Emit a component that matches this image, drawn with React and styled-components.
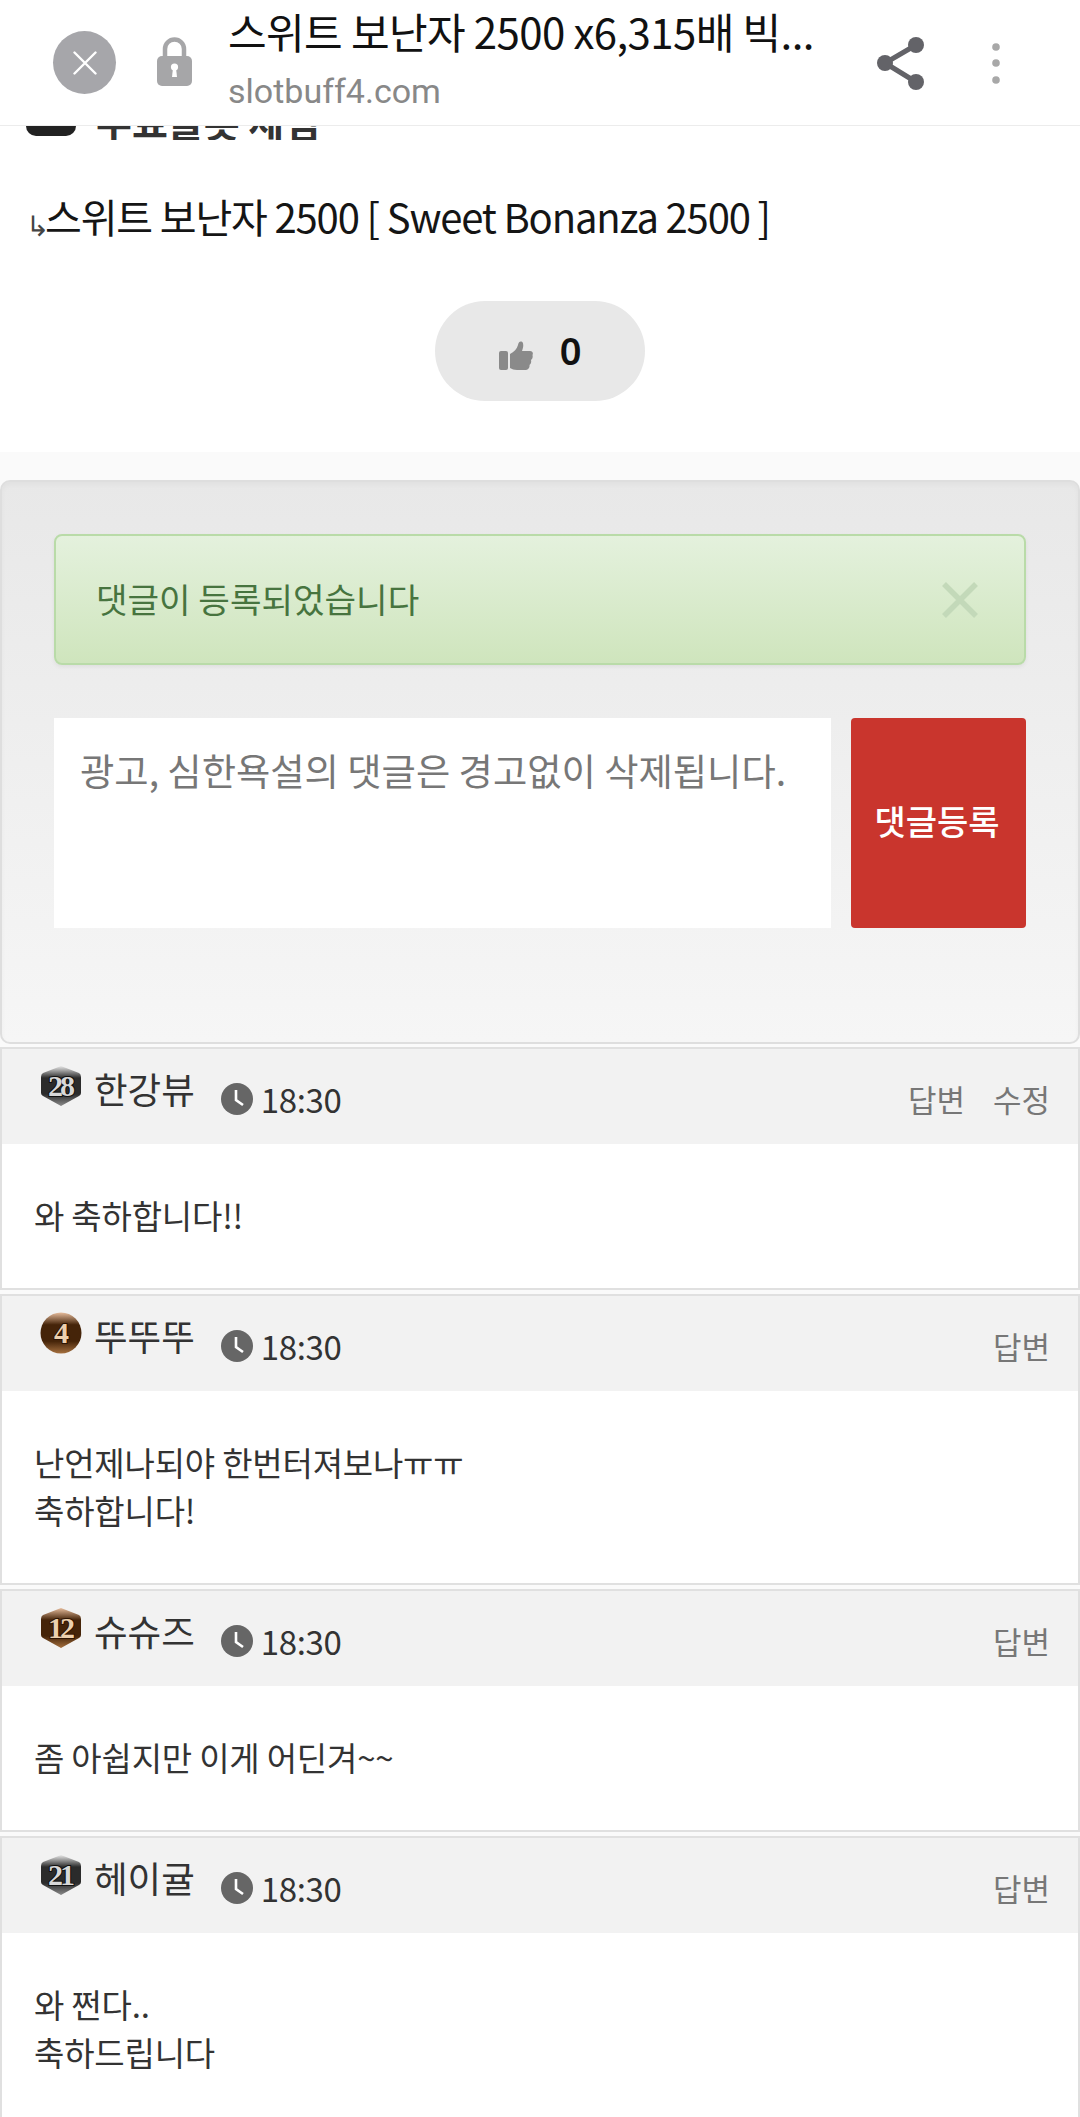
import React from 'react';
import styled, { createGlobalStyle } from 'styled-components';

const Global = createGlobalStyle`
  html, body { margin: 0; padding: 0; background: #fff; }
  body { font-family: "Noto Sans CJK KR", "Noto Sans", sans-serif; color: #222; }
  * { box-sizing: border-box; }
`;
const Page = styled.div`width: 1080px; height: 2117px; overflow: hidden; background: #fafafa;`;
const TopBar = styled.header`
  height: 126px; background: #fff; border-bottom: 1px solid #ececec;
  display: flex; align-items: center; padding: 0 0 0 53px;
`;
const CloseBtn = styled.div`
  width: 63px; height: 63px; border-radius: 50%; background: #a6a6aa;
  display: flex; align-items: center; justify-content: center; flex: none;
`;
const LockIcon = styled.svg`width: 35px; height: 49px; margin: 0 36px 2px 41px; flex: none;`;
const TitleBlock = styled.div`width: 600px; flex: none; margin-top: -6px;`;
const BarTitle = styled.div`font-size: 42px; line-height: 56px; margin-top: -6px; color: #111; letter-spacing: -0.6px; white-space: nowrap;`;
const BarUrl = styled.div`font-family: "Roboto", sans-serif; font-size: 34px; line-height: 40px; margin-top: 12px; color: #888;`;
const ShareIcon = styled.svg`width: 50px; height: 54px; margin-left: 49px; flex: none;`;
const DotsIcon = styled.svg`width: 14px; height: 42px; margin-left: 62px; flex: none;`;

const ContentTop = styled.section`background: #fff; height: 326px; display: flex; flex-direction: column;`;
const ClippedHead = styled.div`height: 14px; overflow: hidden; display: flex; align-items: flex-end; padding-left: 26px; gap: 20px;`;
const ClipPill = styled.div`width: 50px; height: 10px; background: #222; border-radius: 0 0 12px 12px; flex: none; align-self: flex-start;`;
const ClipText = styled.div`font-size: 39px; font-weight: 700; line-height: 40px; margin-top: -26px; align-self: flex-start; color: #333; white-space: nowrap;`;
const SubTitle = styled.h2`
  margin: 48px 0 0 26px; font-size: 40px; line-height: 56px; font-weight: 400; color: #151515;
  letter-spacing: -1.15px; white-space: nowrap; display: flex; align-items: baseline;
`;
const SubArrow = styled.span`font-size: 28px; width: 19px; color: #444; flex: none; letter-spacing: 0; transform: translateY(3px);`;
const LikeWrap = styled.div`display: flex; justify-content: center; margin-top: 52px;`;
const LikeBtn = styled.div`
  width: 210px; height: 100px; border-radius: 50px; background: #e8e8e8;
  display: flex; align-items: center; justify-content: center; gap: 27px;
  font-family: "Noto Sans", sans-serif; font-size: 38px; font-weight: 600; color: #111;
`;
const ThumbIcon = styled.svg`width: 34px; height: 29px; margin-top: 8px; flex: none;`;
const LikeCount = styled.span`margin-top: -3px;`;

const FormPanel = styled.section`
  margin-top: 28px; height: 564px; padding: 52px;
  border: 2px solid #dedede; border-radius: 10px;
  background: linear-gradient(#e8e8e8, #f6f6f6);
  box-shadow: inset 0 3px 5px rgba(0,0,0,.03);
`;
const Alert = styled.div`
  height: 131px; border: 2px solid #b9dba8; border-radius: 8px;
  background: linear-gradient(#e4f1dd, #cfe5bd);
  box-shadow: 0 2px 4px rgba(0,0,0,.06);
  display: flex; align-items: center; justify-content: space-between;
  padding: 0 45px 3px 40px; color: #47743f; font-size: 34.3px;
`;
const AlertX = styled.svg`width: 38px; height: 38px; margin-top: 3px;`;
const InputRow = styled.div`display: flex; gap: 20px; margin-top: 53px;`;
const FakeArea = styled.div`
  width: 777px; height: 210px; background: #fff; padding: 26px; color: #777;
  font-size: 37.3px; line-height: 52px; white-space: nowrap;
`;
const SubmitBtn = styled.div`
  width: 175px; height: 210px; background: #c9352d; color: #fff; border-radius: 4px;
  display: flex; align-items: center; justify-content: center; padding: 0 3px 6px 0;
  font-size: 34px; font-weight: 500; white-space: nowrap;
`;

const List = styled.div`display: flex; flex-direction: column; gap: 4px; margin-top: 3px;`;
const Comment = styled.article`border: 2px solid #e0e0e0; background: #fff;`;
const Head = styled.div`
  height: 95px; background: #f2f2f2; display: flex; align-items: flex-start;
  padding: 16px 28px 0 38px;
`;
const Badge = styled.svg`width: 42px; height: 42px; flex: none;`;
const Name = styled.span`font-size: 36.5px; line-height: 48px; margin-left: 12px; color: #333; white-space: nowrap;`;
const Time = styled.span`
  display: inline-flex; align-items: center; gap: 8px; margin: 10px 0 0 26px;
  font-size: 33px; line-height: 48px; color: #333; letter-spacing: -0.35px;
`;
const Actions = styled.div`margin: 10px 0 0 auto; display: flex; gap: 28px; font-size: 31px; line-height: 48px; color: #777;`;
const Body = styled.div`padding: 47px 32px 49px; font-size: 33px; line-height: 48px; color: #333; letter-spacing: -0.2px;`;
const BadgeNumber = styled.text`
  font-family: "Liberation Serif", serif; font-size: 30px; font-weight: 700;
  letter-spacing: -3px; paint-order: stroke; stroke-width: 2px;
`;

const Clock = () => (
  <svg width="32" height="32" viewBox="0 0 32 32">
    <circle cx="16" cy="16" r="16" fill="#666" />
    <path d="M15 7v10l7 5" stroke="#fff" strokeWidth="2.6" fill="none" />
  </svg>
);

const palettes = {
  silver: ['#e8e8e8', '#2b2b2b', '#8c8c8c'],
  bronze: ['#e6bc9c', '#452409', '#a5703f'],
};
const Level = ({ n, tone, round, id }) => {
  const [a, b, c] = palettes[tone];
  return (
    <Badge viewBox="0 0 42 42">
      <defs>
        <linearGradient id={id} x1="0" y1="0" x2="0" y2="1">
          <stop offset="0" stopColor={a} />
          <stop offset=".3" stopColor={b} />
          <stop offset=".7" stopColor={b} />
          <stop offset="1" stopColor={c} />
        </linearGradient>
      </defs>
      {round
        ? <circle cx="21" cy="21" r="20.5" fill={`url(#${id})`} />
        : <path d="M21 1 L39 8 Q41 9 41 12 V28 Q41 30 39 31 L21 41 L3 31 Q1 30 1 28 V12 Q1 9 3 8 Z" fill={`url(#${id})`} />}
      <BadgeNumber x="20" y="31" textAnchor="middle"
        fill={tone === 'silver' ? '#d8d8d8' : '#ecd0ae'}
        stroke={tone === 'silver' ? '#111' : '#2e1503'}>{n}</BadgeNumber>
    </Badge>
  );
};

const comments = [
  { id: 'b1', n: 28, tone: 'silver', name: '한강뷰', lines: ['와 축하합니다!!'], edit: true },
  { id: 'b2', n: 4, tone: 'bronze', round: true, name: '뚜뚜뚜', lines: ['난언제나되야 한번터져보나ㅠㅠ', '축하합니다!'] },
  { id: 'b3', n: 12, tone: 'bronze', name: '슈슈즈', lines: ['좀 아쉽지만 이게 어딘겨~~'] },
  { id: 'b4', n: 21, tone: 'silver', name: '헤이귤', lines: ['와 쩐다..', '축하드립니다'] },
];

export default function App() {
  return (
    <Page>
      <Global />
      <TopBar>
        <CloseBtn>
          <svg width="24" height="24" viewBox="0 0 24 24"><path d="M1.5 1.5l21 21M22.5 1.5l-21 21" stroke="#fff" strokeWidth="2.4" strokeLinecap="round" /></svg>
        </CloseBtn>
        <LockIcon viewBox="0 0 35 49">
          <path d="M8 22V12a9.5 9.5 0 0 1 19 0v10" fill="none" stroke="#a6a6a8" strokeWidth="4.5" />
          <rect x="0" y="19" width="35" height="30" rx="5" fill="#a6a6a8" />
          <circle cx="17.5" cy="30" r="3.6" fill="#fff" />
          <path d="M16 31h3l1 9h-5z" fill="#fff" />
        </LockIcon>
        <TitleBlock>
          <BarTitle>스위트 보난자 2500 x6,315배 빅...</BarTitle>
          <BarUrl>slotbuff4.com</BarUrl>
        </TitleBlock>
        <ShareIcon viewBox="0 0 50 54">
          <path d="M39 9L8 27l31 19" fill="none" stroke="#636368" strokeWidth="5" />
          <circle cx="39" cy="9" r="8" fill="#636368" />
          <circle cx="8" cy="27" r="8" fill="#636368" />
          <circle cx="39" cy="46" r="8" fill="#636368" />
        </ShareIcon>
        <DotsIcon viewBox="0 0 14 42">
          <circle cx="7" cy="5" r="3.8" fill="#a8a8a8" />
          <circle cx="7" cy="21" r="3.8" fill="#a8a8a8" />
          <circle cx="7" cy="38" r="3.8" fill="#a8a8a8" />
        </DotsIcon>
      </TopBar>
      <ContentTop>
        <ClippedHead>
          <ClipPill />
          <ClipText>무료슬롯 체험</ClipText>
        </ClippedHead>
        <SubTitle><SubArrow>↳</SubArrow><span>스위트 보난자 2500 [ Sweet Bonanza 2500 ]</span></SubTitle>
        <LikeWrap>
          <LikeBtn>
            <ThumbIcon viewBox="0 0 34 29">
              <rect x="0" y="10" width="9" height="19" rx="2" fill="#8a8a8a" />
              <path d="M11 13C15 11 18 8 19 4C19.5 1 21 0 22.5 .5C25 1.5 24.5 6 23 10L31 10C33.5 10 34.5 12 33.5 14C34 16 33.5 18 32 19C32.5 21 32 23 30.5 24C31 26 29.5 29 27 29L18 29C15 29 13 28 11 27Z" fill="#8a8a8a" />
            </ThumbIcon>
            <LikeCount>0</LikeCount>
          </LikeBtn>
        </LikeWrap>
      </ContentTop>
      <FormPanel>
        <Alert>
          <span>댓글이 등록되었습니다</span>
          <AlertX viewBox="0 0 38 38"><path d="M3 3l32 32M35 3L3 35" stroke="#c3d9b9" strokeWidth="5.5" /></AlertX>
        </Alert>
        <InputRow>
          <FakeArea>광고, 심한욕설의 댓글은 경고없이 삭제됩니다.</FakeArea>
          <SubmitBtn>댓글등록</SubmitBtn>
        </InputRow>
      </FormPanel>
      <List>
        {comments.map((c) => (
          <Comment key={c.id}>
            <Head>
              <Level n={c.n} tone={c.tone} round={c.round} id={c.id} />
              <Name>{c.name}</Name>
              <Time><Clock />18:30</Time>
              <Actions>
                <span>답변</span>
                {c.edit && <span>수정</span>}
              </Actions>
            </Head>
            <Body>{c.lines.map((l) => <div key={l}>{l}</div>)}</Body>
          </Comment>
        ))}
      </List>
    </Page>
  );
}
